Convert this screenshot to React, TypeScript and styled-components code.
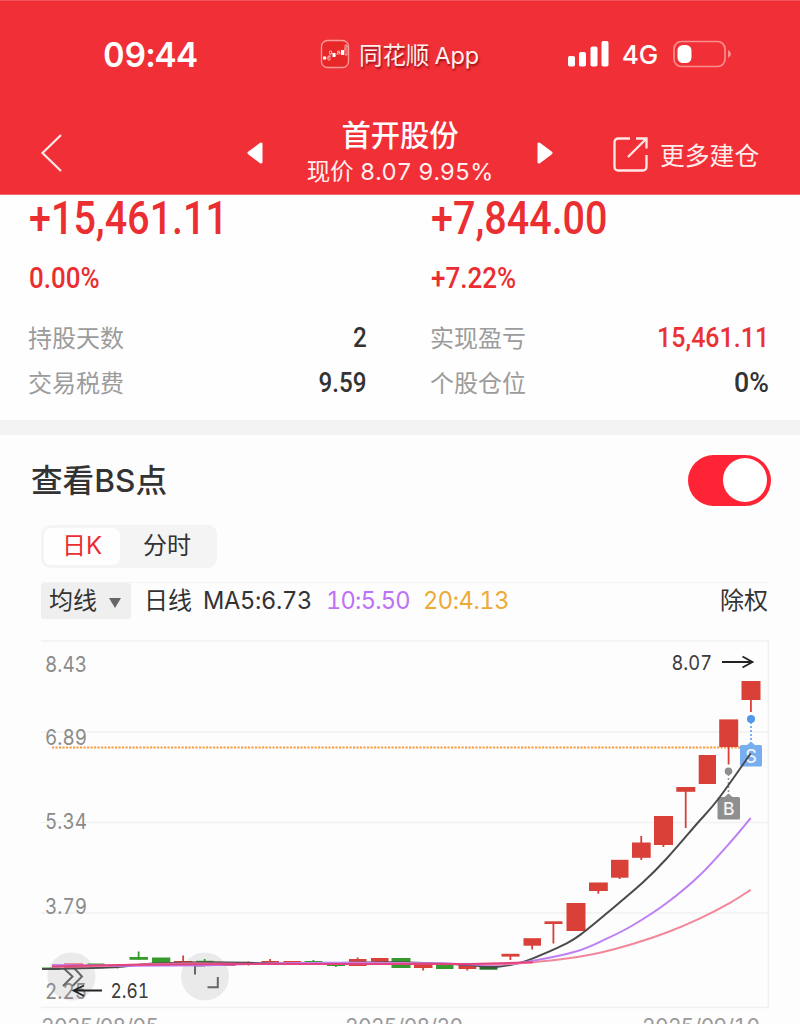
import React, { useState } from "react";
import styled, { createGlobalStyle } from "styled-components";

const GlobalStyle = createGlobalStyle`
  * { box-sizing: border-box; }
  body {
    margin: 0;
    background: #fdfdfd;
    font-family: Inter, "Noto Sans CJK SC", sans-serif;
    font-variant-numeric: tabular-nums;
    color: #333;
    overflow: hidden;
  }
`;

const Screen = styled.div`
  width: 800px;
  height: 1024px;
  overflow: hidden;
  display: flex;
  flex-direction: column;
`;

const Header = styled.header`
  height: 195px;
  flex: none;
  background: #f12f37;
  color: #fff;
  border-top: 1px solid #f4555a;
  border-bottom: 1px solid #f4666b;
`;

const StatusBar = styled.div`
  display: flex;
  align-items: center;
  height: 40px;
  margin-top: 33px;
  padding-left: 103px;
`;

const Clock = styled.div`
  width: 217px;
  font-size: 33.5px;
  font-weight: 600;
  line-height: 40px;
  letter-spacing: -0.2px;
  padding-top: 1px;
  white-space: nowrap;
`;

const AppTag = styled.div`
  display: flex;
  align-items: center;
  width: 247px;
  gap: 9px;
  font-size: 23.5px;
  line-height: 40px;
  letter-spacing: -0.1px;
  white-space: nowrap;
  color: #fff0ef;
  text-shadow: 1px 2px 2px rgba(90, 0, 0, 0.6);
`;

const AppName = styled.span`
  padding-top: 4px;
  word-spacing: -1px;
`;

const Network = styled.div`
  width: 37px;
  margin: 0 14px 0 13px;
  padding-top: 2px;
  font-size: 26px;
  font-weight: 450;
  letter-spacing: -0.2px;
  line-height: 40px;
`;

const NavBar = styled.div`
  display: flex;
  align-items: center;
  height: 84px;
  margin-top: 37px;
  padding-left: 38px;
`;

const NavButton = styled.button<{ $gap: number }>`
  display: flex;
  padding: 0;
  border: 0;
  background: none;
  margin-right: ${(p) => p.$gap}px;
`;

const StockTitle = styled.div`
  display: flex;
  flex-direction: column;
  align-items: center;
  width: 270px;
  padding-bottom: 2px;
`;

const StockName = styled.h1`
  margin: 0;
  font-size: 29.3px;
  font-weight: 500;
  line-height: 39px;
`;

const StockPrice = styled.div`
  font-size: 23.5px;
  line-height: 34px;
  letter-spacing: 0;
  color: #fff0ef;
`;

const MoreButton = styled.button`
  display: flex;
  align-items: center;
  gap: 11px;
  padding: 2px 0 0;
  border: 0;
  background: none;
  font: inherit;
  font-size: 24.8px;
  color: #ffeceb;
  white-space: nowrap;
`;

const Summary = styled.section`
  display: grid;
  grid-template-columns: 338px 338px;
  column-gap: 64px;
  height: 225px;
  flex: none;
  padding-left: 29px;
  background: #fefefe;
`;

const Column = styled.div`
  display: flex;
  flex-direction: column;
`;

const Figure = styled.span<{ $size: number; $tone?: string; $from?: string; $scale?: number }>`
  font-family: Roboto, sans-serif;
  font-size: ${(p) => p.$size}px;
  font-weight: 500;
  color: ${(p) => p.$tone ?? "#333"};
  white-space: nowrap;
  transform: scaleX(${(p) => p.$scale ?? 0.88});
  transform-origin: ${(p) => p.$from ?? "left"} center;
`;

const Profit = styled.div`
  display: flex;
  height: 46px;
  align-items: center;
  line-height: 46px;
  margin-bottom: 18px;
`;

const Rate = styled.div`
  display: flex;
  height: 38px;
  align-items: center;
  margin-bottom: 18px;
`;

const DetailRow = styled.div`
  display: flex;
  justify-content: space-between;
  align-items: center;
  height: 45px;
`;

const DetailLabel = styled.span`
  margin-left: -1px;
  padding-bottom: 2px;
  font-size: 24px;
  font-weight: 400;
  color: #9c9c9c;
`;

const Divider = styled.div`
  height: 15px;
  flex: none;
  background: #f3f3f3;
`;

const SectionHead = styled.div`
  display: flex;
  justify-content: space-between;
  align-items: center;
  height: 90px;
  flex: none;
  padding: 0 29px 0 31px;
`;

const SectionTitle = styled.h2`
  margin: 0;
  padding-bottom: 5px;
  font-size: 31.6px;
  font-weight: 500;
  color: #333;
`;

const Latin = styled.span`
  font-weight: 450;
`;

const Switch = styled.button`
  display: flex;
  justify-content: flex-end;
  align-items: center;
  width: 83px;
  height: 51px;
  padding: 0 4px;
  border: 0;
  border-radius: 26px;
  background: #ff2435;
`;

const Knob = styled.span`
  width: 44px;
  height: 44px;
  border-radius: 50%;
  background: #fff;
`;

const Tabs = styled.div`
  display: flex;
  width: 176px;
  height: 43px;
  flex: none;
  margin-left: 41px;
  padding: 3px;
  border-radius: 9px;
  background: #f4f4f4;
`;

const Tab = styled.button<{ $active: boolean }>`
  width: ${(p) => (p.$active ? 76 : 94)}px;
  padding: 0 0 1px;
  border: 0;
  border-radius: 7px;
  font: inherit;
  font-size: 24px;
  line-height: 34px;
  color: ${(p) => (p.$active ? "#eb2d30" : "#333")};
  background: ${(p) => (p.$active ? "#fefefe" : "transparent")};
`;

const Averages = styled.div`
  display: flex;
  align-items: center;
  height: 37px;
  flex: none;
  margin: 14px 32px 0 41px;
  border-top: 1px solid #f3f3f3;
  font-size: 24px;
  white-space: nowrap;
`;

const Picker = styled.button`
  display: flex;
  align-items: center;
  gap: 11px;
  width: 90px;
  height: 36px;
  margin-right: 13px;
  padding: 0 0 6px 8px;
  border: 0;
  border-radius: 3px;
  background: #efefef;
  font: inherit;
  color: #333;
`;

const Caret = styled.svg`
  width: 14px;
  height: 12px;
  margin-top: 7px;
`;

const Average = styled.span<{ $tone: string; $width: number; $tracking: number }>`
  width: ${(p) => p.$width}px;
  padding-bottom: 2px;
  font-size: 23.6px;
  letter-spacing: ${(p) => p.$tracking}px;
  color: ${(p) => p.$tone};
`;

const Mode = styled.span`
  margin-right: 11px;
  padding-bottom: 5px;
`;

const Adjust = styled.span`
  margin-left: auto;
  padding-bottom: 5px;
`;

const Chart = styled.svg`
  display: block;
  flex: none;
  width: 800px;
  height: 405px;
`;

type Candle = [x: number, w: number, top: number, bottom: number, color: string, high?: number, low?: number];
const R = "#d84038";
const G = "#369b2c";

const candles: Candle[] = [
  [42, 18.5, 967.5, 970, G],
  [64, 19, 963.5, 969, R],
  [87.5, 17, 963.5, 965, G],
  [109, 17, 966, 967, G, 965, 968.5],
  [129.5, 18.5, 957, 959.8, G, 951.5],
  [152, 18.3, 957.5, 963, G],
  [174, 18.5, 961, 963, R, 955.5],
  [196, 17.5, 960.8, 963, G, 959],
  [217, 18.5, 963.5, 966, R],
  [240, 17, 963, 964.5, R, 961.5, 965.5],
  [261.5, 17.5, 961, 963, R, 959],
  [283.5, 17.5, 961, 963, R],
  [304.5, 18, 961, 963, G, 960],
  [327, 18, 964, 966, G, 963, 967],
  [349, 17.5, 959, 966, R, 957.5],
  [371, 17.5, 958, 962, R],
  [391.5, 19, 958, 968, G],
  [414, 18.5, 964.5, 968, R, 963, 970.5],
  [436, 17.5, 964.5, 969, G],
  [458.5, 17.8, 965, 969, R, 963, 970.5],
  [479.5, 18, 966.5, 969.7, "#26702a"],
  [501.5, 18, 953.8, 956.6, R, 954, 960],
  [523.5, 17.5, 938.2, 945.7, R, 939, 949.5],
  [544.5, 18, 921.3, 924, R, 922, 943.5],
  [566.5, 19, 903, 931, R],
  [589, 18.8, 882.5, 891, R, 883, 893.7],
  [611, 17.5, 859.8, 877.7, R, 860, 879],
  [632, 18.7, 842.5, 857.8, R, 836, 860],
  [654, 19, 816, 845, R, 817, 847],
  [676.3, 19, 787, 791.8, R, 788, 828],
  [698.7, 17.3, 755, 784, R],
  [719.2, 19, 719.4, 747, R, 720, 764.5],
  [741.5, 19, 681, 700, R, 682, 712],
];

type Point = [number, number];

const ma5: Point[] = [[42, 969], [70, 968.5], [117, 967], [150, 963.8], [210, 962.3], [280, 963.4], [340, 963], [390, 962.2], [440, 963.5], [468, 965], [485, 966.5], [500, 966.5], [520, 962.8], [533, 958.3], [566.7, 943.3], [583.3, 932.5], [608.3, 912], [643.3, 882], [666.7, 858.5], [696.7, 824], [718.3, 799], [750.7, 753.5]];
const ma10: Point[] = [[52, 965], [90, 965.5], [130, 965.8], [210, 965.2], [280, 963.2], [370, 962.8], [440, 963.5], [500, 964.7], [533, 960.8], [576.7, 951.3], [606.7, 938.7], [633.3, 925], [666.7, 903], [700, 875], [732.3, 840], [750.7, 818]];
const ma20: Point[] = [[52, 966.5], [90, 966.3], [130, 964.8], [190, 963.6], [260, 964], [330, 964], [400, 963.7], [470, 964], [500, 964.2], [533, 962.3], [566.7, 958.6], [600, 952.7], [633.3, 943.8], [666.7, 932.5], [700, 918.3], [730, 902.8], [750.7, 889.8]];

/** Catmull-Rom spline through the points, written as cubic Bézier segments. */
function spline(pts: Point[]): string {
  let d = `M${pts[0][0]} ${pts[0][1]}`;
  for (let i = 0; i < pts.length - 1; i++) {
    const a = pts[Math.max(i - 1, 0)];
    const b = pts[i];
    const c = pts[i + 1];
    const e = pts[Math.min(i + 2, pts.length - 1)];
    d += `C${b[0] + (c[0] - a[0]) / 6} ${b[1] + (c[1] - a[1]) / 6} ${c[0] - (e[0] - b[0]) / 6} ${c[1] - (e[1] - b[1]) / 6} ${c[0]} ${c[1]}`;
  }
  return d;
}

const priceLabels: [string, number][] = [["8.43", 671.5], ["6.89", 744.5], ["5.34", 829], ["3.79", 914], ["2.25", 998.5]];
const dates: [string, number][] = [["2025/08/05", 41], ["2025/08/20", 345], ["2025/09/10", 642]];

function CandleChart() {
  return (
    <Chart viewBox="0 619 800 405">
      <g stroke="#f1f1f1" strokeWidth="1.5" fill="none">
        <path d="M41 641H768.3V1007.5H41" />
        <path d="M41 732H768M41 822.5H768M41 913H768" />
      </g>
      <g fill="#e9e9e9" opacity=".9">
        <circle cx="71.5" cy="976.5" r="24" />
        <circle cx="205" cy="976.5" r="24" />
      </g>
      <g fill="#8b8b8b" fontSize="21.5">
        {priceLabels.map(([t, y]) => (
          <text key={t} x="45" y={y} textLength="42" lengthAdjust="spacingAndGlyphs">{t}</text>
        ))}
      </g>
      <g fill="#9a9a9a" fontSize="21">
        {dates.map(([t, x]) => (
          <text key={t} x={x} y="1034.3" textLength="118">{t}</text>
        ))}
      </g>
      <path d="M52 747.6H740" stroke="#f59b45" strokeWidth="2" strokeDasharray="2.2 1.3" />
      <g fill="none" stroke="#666" strokeWidth="2">
        <path d="M64 968.5L72.5 976.5L63 986M74.5 968.5L82 976.5L72.5 986" />
        <path d="M195 974.5V965.5H205M207.5 987.2H217.8V977" />
      </g>
      {candles.map(([x, w, top, bottom, color, high, low]) => (
        <g key={x} fill={color}>
          <rect x={x} y={top} width={w} height={bottom - top} />
          {(high || low) && (
            <rect x={x + w / 2 - 1} y={high ?? top} width="1.8" height={(low ?? bottom) - (high ?? top)} />
          )}
        </g>
      ))}
      <g strokeDasharray="2 2" strokeWidth="1.6">
        <path d="M728.5 774V796" stroke="#999" />
        <path d="M751 722V742" stroke="#5a9fea" />
      </g>
      <circle cx="728.5" cy="771.3" r="3.8" fill="#8e8e8e" />
      <circle cx="751" cy="719" r="4" fill="#5399e8" />
      <path d="M719 797H724.5L728.5 793.5L732.5 797H738.5Q740 797 740 798.5V818Q740 819.5 738.5 819.5H719Q717.5 819.5 717.5 818V798.5Q717.5 797 719 797Z" fill="#8f8f8f" />
      <path d="M741.5 745H747L751 741.5L755 745H760.5Q762 745 762 746.5V765Q762 766.5 760.5 766.5H741.5Q740 766.5 740 765V746.5Q740 745 741.5 745Z" fill="#77aef0" />
      <text x="728.7" y="815" fontSize="17.5" fontWeight="500" fill="#f5f5f5" textAnchor="middle">B</text>
      <text x="751" y="762.5" fontSize="18" fontWeight="500" fill="#e8f2ff" textAnchor="middle">S</text>
      <g fill="none" strokeWidth="2">
        <path d={spline(ma5)} stroke="#4b4b4d" />
        <path d={spline(ma10)} stroke="#bd80f4" />
        <path d={spline(ma20)} stroke="#f2879b" />
        <path d="M52 966.5C120 965 160 963.6 260 964S400 963.7 470 964T533 962.3" stroke="#e14383" />
      </g>
      <g stroke="#222" strokeWidth="1.8" fill="none">
        <path d="M722 662H751M742.5 656.5L752.5 662L742.5 667.5" />
        <path d="M102 990.5H74M84 985.5L73.5 990.5L84 996" />
      </g>
      <g fill="#3c3c3c" fontSize="20.5">
        <text x="671.5" y="669.5" textLength="40.5" lengthAdjust="spacingAndGlyphs">8.07</text>
        <text x="110.5" y="998" textLength="38.5" lengthAdjust="spacingAndGlyphs">2.61</text>
      </g>
    </Chart>
  );
}

function Detail({ label, value, red, scale }: { label: string; value: string; red?: boolean; scale?: number }) {
  return (
    <DetailRow>
      <DetailLabel>{label}</DetailLabel>
      <Figure $size={27.5} $from="right" $scale={scale} $tone={red ? "#ea3236" : undefined}>{value}</Figure>
    </DetailRow>
  );
}

export default function App() {
  const [tab, setTab] = useState(0);
  return (
    <Screen>
      <GlobalStyle />
      <Header>
        <StatusBar>
          <Clock>09:44</Clock>
          <AppTag>
            <svg width="30" height="30" viewBox="0 0 30 30">
              <rect x="1.5" y="1.5" width="27" height="27" rx="6" fill="#e82828" stroke="#f99a98" strokeWidth="1.3" />
              <path d="M3 19L8 19L12 13.5L15 17L19 13L22 15L27 7" fill="none" stroke="#f4aaa5" strokeWidth=".7" />
              <path d="M3 17.5h3v3H3zM12.5 14h3v4h-3zM21 11h3v5h-3z" fill="#fff" />
              <path d="M8 17h2v4H8zM9.5 12h2v3h-2zM17.5 12h2v3h-2zM25 6h2v10h-2z" fill="none" stroke="#ffd0cd" strokeWidth=".7" />
            </svg>
            <AppName>同花顺 App</AppName>
          </AppTag>
          <svg width="42" height="26" viewBox="0 0 42 26" fill="#fff">
            <rect x="1" y="15" width="7" height="10.5" rx="1.8" />
            <rect x="12" y="11" width="7" height="14.5" rx="1.8" />
            <rect x="23.5" y="5.5" width="7" height="20" rx="1.8" />
            <rect x="34.5" y="0" width="7" height="25.5" rx="1.8" />
          </svg>
          <Network>4G</Network>
          <svg width="59" height="28" viewBox="0 0 59 28">
            <rect x="1" y="1.5" width="51" height="25" rx="7.5" fill="none" stroke="#fa8d8d" strokeWidth="1.7" />
            <rect x="4.5" y="5" width="14" height="18" rx="5.5" fill="#fff" />
            <path d="M55 10Q58 11.5 58 14T55 18Z" fill="#fa8d8d" />
          </svg>
        </StatusBar>
        <NavBar>
          <NavButton $gap={181} aria-label="back">
            <svg width="28" height="40" viewBox="0 0 28 40">
              <path d="M23 2L4.5 20L23 38" fill="none" stroke="#ffe9e7" strokeWidth="2.2" />
            </svg>
          </NavButton>
          <NavButton $gap={0} aria-label="previous">
            <svg width="18" height="22" viewBox="0 0 18 22">
              <path d="M2 11L14 2V20Z" fill="#fff" stroke="#fff" strokeWidth="3" strokeLinejoin="round" />
            </svg>
          </NavButton>
          <StockTitle>
            <StockName>首开股份</StockName>
            <StockPrice>现价 8.07 9.95%</StockPrice>
          </StockTitle>
          <NavButton $gap={59} aria-label="next">
            <svg width="18" height="22" viewBox="0 0 18 22">
              <path d="M16 11L4 2V20Z" fill="#fff" stroke="#fff" strokeWidth="3" strokeLinejoin="round" />
            </svg>
          </NavButton>
          <MoreButton>
            <svg width="37" height="37" viewBox="0 0 37 37" fill="none" stroke="#ffe9e7" strokeWidth="2.3">
              <path d="M18 2.5H6.5Q2.5 2.5 2.5 6.5V30.5Q2.5 34.5 6.5 34.5H30.5Q34.5 34.5 34.5 30.5V19" />
              <path d="M24 2.5H34.5V12.5M34.5 2.5L16 21" />
            </svg>
            更多建仓
          </MoreButton>
        </NavBar>
      </Header>
      <Summary>
        <Column>
          <Profit><Figure $size={46.5} $scale={0.85} $tone="#ea2e32">+15,461.11</Figure></Profit>
          <Rate><Figure $size={29.5} $tone="#ea2e32">0.00%</Figure></Rate>
          <Detail label="持股天数" value="2" />
          <Detail label="交易税费" value="9.59" />
        </Column>
        <Column>
          <Profit><Figure $size={46.5} $scale={0.85} $tone="#ea2e32">+7,844.00</Figure></Profit>
          <Rate><Figure $size={29.5} $tone="#ea2e32">+7.22%</Figure></Rate>
          <Detail label="实现盈亏" value="15,461.11" red scale={0.91} />
          <Detail label="个股仓位" value="0%" scale={0.97} />
        </Column>
      </Summary>
      <Divider />
      <SectionHead>
        <SectionTitle>查看<Latin>BS</Latin>点</SectionTitle>
        <Switch role="switch" aria-checked="true"><Knob /></Switch>
      </SectionHead>
      <Tabs>
        {["日K", "分时"].map((t, i) => (
          <Tab key={t} $active={tab === i} onClick={() => setTab(i)}>{t}</Tab>
        ))}
      </Tabs>
      <Averages>
        <Picker>
          均线
          <Caret viewBox="0 0 14 12"><path d="M1 2H13L7 12Z" fill="#666" /></Caret>
        </Picker>
        <Mode>日线</Mode>
        <Average $tone="#333" $width={123} $tracking={-0.3}>MA5:6.73</Average>
        <Average $tone="#bd72f7" $width={97} $tracking={-0.75}>10:5.50</Average>
        <Average $tone="#ecab36" $width={90} $tracking={-0.45}>20:4.13</Average>
        <Adjust>除权</Adjust>
      </Averages>
      <CandleChart />
    </Screen>
  );
}
